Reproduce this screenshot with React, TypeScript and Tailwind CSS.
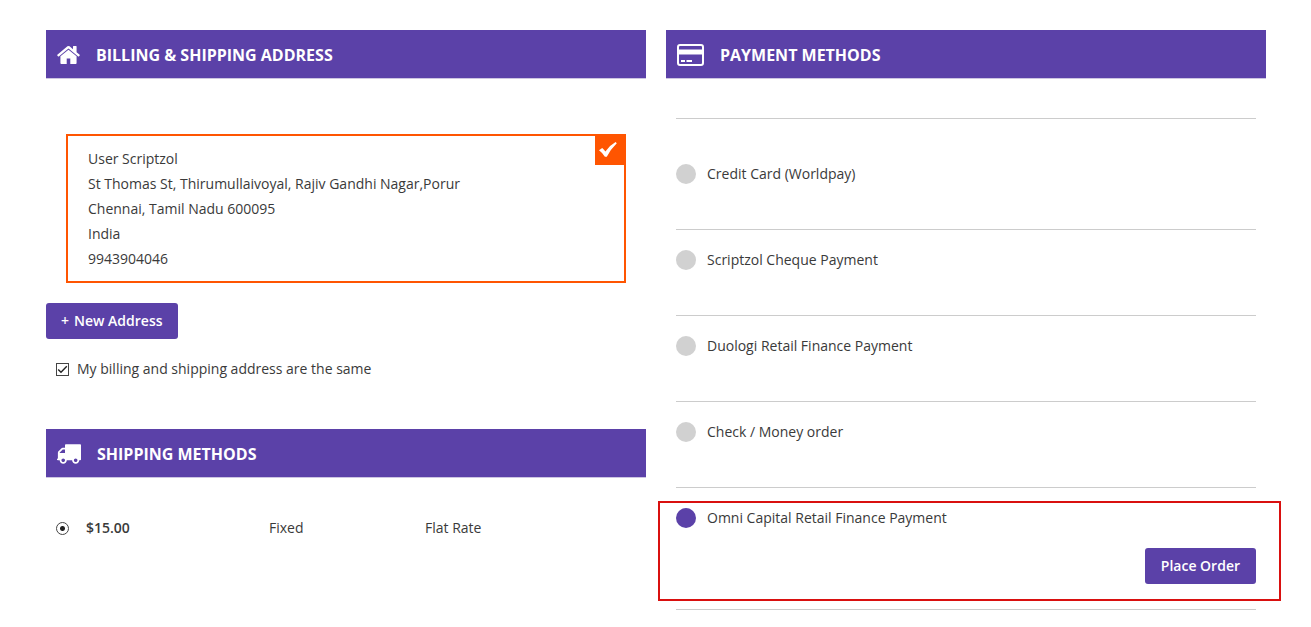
import { useState } from "react";
import type { ReactNode } from "react";

const paymentMethods = [
  { id: "worldpay", label: "Credit Card (Worldpay)" },
  { id: "cheque", label: "Scriptzol Cheque Payment" },
  { id: "duologi", label: "Duologi Retail Finance Payment" },
  { id: "checkmo", label: "Check / Money order" },
  { id: "omni", label: "Omni Capital Retail Finance Payment" },
];

const addressLines = [
  "User Scriptzol",
  "St Thomas St, Thirumullaivoyal, Rajiv Gandhi Nagar,Porur",
  "Chennai, Tamil Nadu 600095",
  "India",
  "9943904046",
];

const HomeIcon = () => (
  <svg
    width="23"
    height="18"
    viewBox="89 253 1614 1283"
    fill="#fff"
    aria-hidden="true"
  >
    <path d="M1472 992v480q0 26-19 45t-45 19h-384v-384h-256v384h-384q-26 0-45-19t-19-45v-480q0-1 .5-3t.5-3l575-474 575 474q1 2 1 6zm223-69l-62 74q-8 9-21 11h-3q-13 0-21-7l-692-577-692 577q-12 8-24 7-13-2-21-11l-62-74q-8-10-7-23.5t11-21.5l719-599q32-26 76-26t76 26l244 204v-195q0-14 9-23t23-9h192q14 0 23 9t9 23v408l219 182q10 8 11 21.5t-7 23.5z" />
  </svg>
);

const TruckIcon = () => (
  <svg
    width="24"
    height="20"
    viewBox="64 256 1728 1408"
    fill="#fff"
    aria-hidden="true"
  >
    <path d="M640 1408q0-52-38-90t-90-38-90 38-38 90 38 90 90 38 90-38 38-90zm-384-512h384v-256h-158q-13 0-22 9l-195 195q-9 9-9 22v30zm1280 512q0-52-38-90t-90-38-90 38-38 90 38 90 90 38 90-38 38-90zm256-1088v1024q0 15-4 26.5t-13.5 18.5-16.5 11.5-23.5 6-22.5 2-25.5 0-22.5-.5q0 106-75 181t-181 75-181-75-75-181h-384q0 106-75 181t-181 75-181-75-75-181h-64q-3 0-22.5.5t-25.5 0-22.5-2-23.5-6-16.5-11.5-13.5-18.5-4-26.5q0-26 19-45t45-19v-320q0-8-.5-35t0-38 2.5-34.5 6.5-37 14-30.5 22.5-30l198-198q19-19 50.5-32t58.5-13h160v-192q0-26 19-45t45-19h1024q26 0 45 19t19 45z" />
  </svg>
);

const CardIcon = () => (
  <svg width="27" height="22" viewBox="0 0 27 22" fill="none" aria-hidden="true">
    <rect x="1" y="1" width="25" height="20" rx="2" stroke="#fff" strokeWidth="2" />
    <path d="M1 5.5h25v5H1z" fill="#fff" />
    <path d="M4 17h4M9.5 17h5.5" stroke="#fff" strokeWidth="2" />
  </svg>
);

const CheckIcon = () => (
  <svg width="19" height="16" viewBox="0 0 19 16" fill="#fff" aria-hidden="true">
    <path d="M0 8.2L3.2 5.9Q5.2 7.4 6.4 9.4Q10.5 3.4 16.6 0L17.8 1.3Q11.5 7.4 7.8 14.8H5.9Q3.8 11 0 8.2Z" />
  </svg>
);

function SectionHeader({ icon, title }: { icon: ReactNode; title: string }) {
  return (
    <header className="flex items-center gap-4 h-12 pt-0.5 px-[11px] bg-[#5b41a8] text-white shadow-[0_1px_0_#cdc5e2]">
      {icon}
      <h2 className="text-base font-bold uppercase">{title}</h2>
    </header>
  );
}

export default function App() {
  const [sameAddress, setSameAddress] = useState(true);
  const [payment, setPayment] = useState("omni");

  return (
    <main className="grid grid-cols-2 gap-5 pt-[30px] pl-[46px] pr-[45px] bg-white text-sm text-[#3a3a3a] font-['Open_Sans',sans-serif]">
      <div>
        {/* Billing & shipping address */}
        <section>
          <SectionHeader icon={<HomeIcon />} title="Billing & Shipping Address" />

          <address className="relative mx-5 mt-14 px-5 py-[10px] border-2 border-[#ff5501] not-italic leading-[25px]">
            {addressLines.map((line) => (
              <p key={line}>{line}</p>
            ))}
            <span className="absolute -top-0.5 -right-0.5 flex items-center justify-center size-[31px] pr-1 bg-[#ff5501]">
              <CheckIcon />
            </span>
          </address>

          <button
            type="button"
            className="flex items-center gap-[5px] mt-5 h-9 px-[15px] rounded-[3px] bg-[#5b41a8] text-white font-semibold"
          >
            <span>+</span>
            <span>New Address</span>
          </button>

          <label className="flex items-center gap-2 mt-5 ml-[10px] h-5">
            <span className="relative flex size-[13px]">
              <input
                type="checkbox"
                checked={sameAddress}
                onChange={(e) => setSameAddress(e.target.checked)}
                className="peer appearance-none size-[13px] border border-[#444] bg-white"
              />
              <svg
                viewBox="0 0 13 13"
                fill="none"
                className="absolute inset-0 hidden peer-checked:block pointer-events-none"
                aria-hidden="true"
              >
                <path d="M2.2 6.5L5 9.3L10.8 3.3" stroke="#222" strokeWidth="1.4" />
              </svg>
            </span>
            My billing and shipping address are the same
          </label>
        </section>

        {/* Shipping methods */}
        <section className="mt-[50px]">
          <SectionHeader icon={<TruckIcon />} title="Shipping Methods" />

          <table className="w-full mt-10">
            <tbody>
              <tr className="h-[22px]">
                <td className="w-10 pl-[10px]">
                  <input
                    type="radio"
                    id="flat-rate"
                    name="shipping"
                    defaultChecked
                    className="block appearance-none size-[13px] rounded-full border border-[#444] checked:bg-[radial-gradient(circle,#222_2px,white_3px)]"
                  />
                </td>
                <td className="w-[183px] font-semibold">
                  <label htmlFor="flat-rate">$15.00</label>
                </td>
                <td className="w-[156px]">Fixed</td>
                <td>Flat Rate</td>
              </tr>
            </tbody>
          </table>
        </section>
      </div>

      {/* Payment methods */}
      <section>
        <SectionHeader icon={<CardIcon />} title="Payment Methods" />

        <div className="mx-[10px] mt-10 border-b border-[#ccc]">
          {paymentMethods.map((method) => (
            <div
              key={method.id}
              className="relative pt-5 pb-[45px] first:pt-[45px] last:pb-[25px] border-t border-[#ccc]"
            >
              <label className="flex items-center gap-[11px] h-5">
                <input
                  type="radio"
                  name="payment"
                  checked={payment === method.id}
                  onChange={() => setPayment(method.id)}
                  className="appearance-none size-5 rounded-full bg-[#d1d1d1] checked:bg-[#5b41a8]"
                />
                {method.label}
              </label>

              {method.id === "omni" && (
                <>
                  <div className="flex justify-end mt-5">
                    <button
                      type="button"
                      className="h-9 px-4 rounded-[3px] bg-[#5b41a8] text-white font-semibold"
                    >
                      Place Order
                    </button>
                  </div>
                  <div className="absolute top-[13px] bottom-2 -left-[18px] -right-[25px] border-2 border-[#d9100f] pointer-events-none" />
                </>
              )}
            </div>
          ))}
        </div>
      </section>
    </main>
  );
}
